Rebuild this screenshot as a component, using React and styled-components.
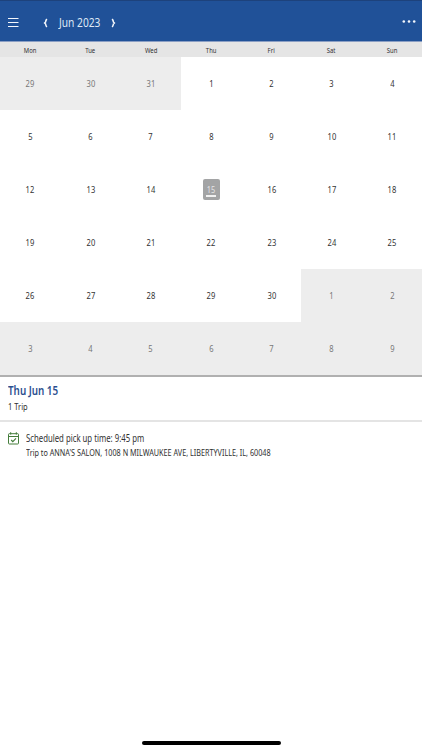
import styled, { createGlobalStyle } from "styled-components";

const GlobalStyle = createGlobalStyle`
  * {
    box-sizing: border-box;
  }
  body {
    margin: 0;
    background-color: #fff;
    font-family: "Noto Sans", "Open Sans", sans-serif;
    color: #303030;
  }
`;

const Screen = styled.main`
  height: 750px;
  display: flex;
  flex-direction: column;
  overflow: hidden;
`;

const Header = styled.header`
  height: 42px;
  flex-shrink: 0;
  display: flex;
  align-items: center;
  padding: 2px 6px 0 8px;
  background-color: #205198;
  border-top: 1px solid #1d427c;
  border-bottom: 1px solid #8b9fc4;
`;

const IconButton = styled.button`
  display: flex;
  padding: 0;
  border: none;
  background-color: transparent;
  color: #f4f7fc;
  cursor: pointer;
  > svg {
    display: block;
  }
`;

const MonthPicker = styled.div`
  display: flex;
  align-items: center;
  flex: 1;
  margin-left: 24px;
  padding-top: 1px;
`;

/* condensed line of text, narrowed from its left edge */
const Line = styled.span`
  display: block;
  white-space: nowrap;
  transform: scaleX(${({ $narrow }) => $narrow || 1});
  transform-origin: ${({ $origin }) => $origin || "left"};
`;

const Month = styled.h1`
  width: 42px;
  margin: 0 10px 0 11px;
  font-size: 12.6px;
  line-height: 16px;
  font-weight: 400;
  color: #dfe8f5;
`;

const Weekdays = styled.div`
  height: 15px;
  flex-shrink: 0;
  display: grid;
  grid-template-columns: repeat(7, 1fr);
  background-color: #e5e5e5;
  font-size: 7.4px;
  line-height: 16px;
  text-align: center;
`;

const MonthGrid = styled.div`
  flex-shrink: 0;
  display: grid;
  grid-template-columns: repeat(7, 1fr);
  grid-auto-rows: 53px;
  border-bottom: 2px solid #b0b0b0;
`;

const Day = styled.div`
  display: flex;
  align-items: center;
  justify-content: center;
  padding-left: 0.5px;
  font-size: 8.6px;
  line-height: 10px;
  background-color: ${({ $outside }) => ($outside ? "#ededed" : "#fff")};
  color: ${({ $outside }) => ($outside ? "#777" : "#333")};
`;

const Selected = styled.div`
  width: 17px;
  height: 21px;
  display: flex;
  flex-direction: column;
  align-items: center;
  padding-top: 6px;
  border-radius: 2px;
  background-color: #a3a4a5;
  color: #e6e6e6;
  &::after {
    content: "";
    width: 10px;
    height: 2px;
    flex-shrink: 0;
    background-color: #f1f1f1;
  }
`;

const DaySummary = styled.section`
  height: 45px;
  flex-shrink: 0;
  padding: 6px 8px 0;
  border-bottom: 2px solid #e4e4e4;
`;

const DayTitle = styled.h2`
  margin: 0;
  font-size: 12px;
  line-height: 16px;
  font-weight: 600;
  color: #2b4f8f;
`;

const TripCount = styled.p`
  margin: 1px 0 0;
  font-size: 9.4px;
  line-height: 14px;
`;

const Trip = styled.article`
  display: flex;
  padding: 9px 8px;
  gap: 7px;
  > svg {
    flex-shrink: 0;
    margin-top: 1px;
  }
`;

const TripTime = styled.p`
  margin: 0;
  font-size: 10.2px;
  line-height: 14px;
`;

const TripPlace = styled.p`
  margin: 1px 0 0;
  font-size: 8.8px;
  line-height: 14px;
`;

const HomeBar = styled.div`
  width: 139px;
  height: 4px;
  flex-shrink: 0;
  margin: auto auto 5px;
  border-radius: 2px;
  background-color: #000;
`;

const weekdays = ["Mon", "Tue", "Wed", "Thu", "Fri", "Sat", "Sun"];

const days = Array.from({ length: 42 }, (_, i) => {
  if (i < 3) return { number: 29 + i, outside: true };
  if (i < 33) return { number: i - 2, outside: false };
  return { number: i - 32, outside: true };
});

const MenuIcon = () => (
  <svg width="11" height="11" viewBox="0 0 11 11" stroke="currentColor" strokeWidth="1">
    <path d="M0 1.5h10.5M0 5.5h10.5M0 9.5h10.5" />
  </svg>
);

const Chevron = ({ next }) => (
  <svg width="5" height="10" viewBox="0 0 5 10" fill="none" stroke="currentColor" strokeWidth="1.5">
    <path d={next ? "M1.2 1Q2.4 2.8 2.4 4L3.4 5L2.4 6Q2.4 7.2 1.2 9" : "M3.8 1Q2.6 2.8 2.6 4L1.6 5L2.6 6Q2.6 7.2 3.8 9"} />
  </svg>
);

const MoreIcon = () => (
  <svg width="14" height="4" viewBox="0 0 14 4" fill="currentColor">
    <circle cx="1.8" cy="1.5" r="1.3" />
    <circle cx="7" cy="1.5" r="1.3" />
    <circle cx="12.2" cy="1.5" r="1.3" />
  </svg>
);

const CalendarCheck = () => (
  <svg width="11" height="13" viewBox="0 0 11 13" fill="none" stroke="#447d3b" strokeWidth="1">
    <rect x="0.5" y="1.7" width="10" height="10.3" rx="0.8" />
    <path d="M0.5 4.5h10M2.7 0.2v2.4M8.3 0.2v2.4" />
    <path d="M3.2 8l1.6 1.6L8 6.4" strokeWidth="1.2" />
  </svg>
);

const App = () => {
  return (
    <>
      <GlobalStyle />
      <Screen>
        <Header>
          <IconButton aria-label="Menu"><MenuIcon /></IconButton>
          <MonthPicker>
            <IconButton aria-label="Previous month"><Chevron /></IconButton>
            <Month><Line $narrow={0.81}>Jun 2023</Line></Month>
            <IconButton aria-label="Next month"><Chevron next /></IconButton>
          </MonthPicker>
          <IconButton aria-label="More"><MoreIcon /></IconButton>
        </Header>
        <Weekdays>
          {weekdays.map((name) => (
            <Line key={name} $narrow={0.8} $origin="center">{name}</Line>
          ))}
        </Weekdays>
        <MonthGrid>
          {days.map(({ number, outside }, i) => (
            <Day key={i} $outside={outside}>
              {number === 15 ? (
                <Selected><Line $narrow={0.86} $origin="center">15</Line></Selected>
              ) : (
                <Line $narrow={0.88} $origin="center">{number}</Line>
              )}
            </Day>
          ))}
        </MonthGrid>
        <DaySummary>
          <DayTitle><Line $narrow={0.82}>Thu Jun 15</Line></DayTitle>
          <TripCount><Line $narrow={0.8}>1 Trip</Line></TripCount>
        </DaySummary>
        <Trip>
          <CalendarCheck />
          <div>
            <TripTime><Line $narrow={0.762}>Scheduled pick up time: 9:45 pm</Line></TripTime>
            <TripPlace>
              <Line $narrow={0.823}>Trip to ANNA'S SALON, 1008 N MILWAUKEE AVE, LIBERTYVILLE, IL, 60048</Line>
            </TripPlace>
          </div>
        </Trip>
        <HomeBar />
      </Screen>
    </>
  );
};

export default App;
